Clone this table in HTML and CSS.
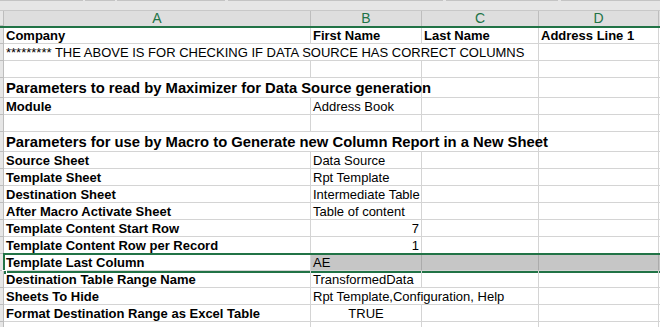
FILE: index.html
```html
<!DOCTYPE html>
<html>
<head>
<meta charset="utf-8">
<link rel="stylesheet" href="styles.css">
</head>
<body>
<div class="sheet">
  <div class="topbar">
    <span class="seg s1"></span><span class="seg s2"></span><span class="seg s3"></span><span class="seg s4"></span><span class="seg s5"></span><span class="seg s6"></span>
  </div>
  <div class="row colhead">
    <div class="rh"></div>
    <div class="ch">A</div>
    <div class="ch">B</div>
    <div class="ch">C</div>
    <div class="ch">D</div>
    <div class="ch last"></div>
  </div>
  <div class="row short">
    <div class="rh"></div>
    <div class="c b">Company</div>
    <div class="c b">First Name</div>
    <div class="c b">Last Name</div>
    <div class="c b">Address Line 1</div>
    <div class="c last"></div>
  </div>
  <div class="row">
    <div class="rh"></div>
    <div class="c span3">********* THE ABOVE IS FOR CHECKING IF DATA SOURCE HAS CORRECT COLUMNS</div>
    <div class="c"></div>
    <div class="c last"></div>
  </div>
  <div class="row">
    <div class="rh"></div>
    <div class="c"></div><div class="c"></div><div class="c"></div><div class="c"></div><div class="c last"></div>
  </div>
  <div class="row tall">
    <div class="rh"></div>
    <div class="c h span2">Parameters to read by Maximizer for Data Source generation</div>
    <div class="c"></div><div class="c"></div><div class="c last"></div>
  </div>
  <div class="row">
    <div class="rh"></div>
    <div class="c b">Module</div>
    <div class="c">Address Book</div>
    <div class="c"></div><div class="c"></div><div class="c last"></div>
  </div>
  <div class="row">
    <div class="rh"></div>
    <div class="c"></div><div class="c"></div><div class="c"></div><div class="c"></div><div class="c last"></div>
  </div>
  <div class="row tall">
    <div class="rh"></div>
    <div class="c h span3">Parameters for use by Macro to Generate new Column Report in a New Sheet</div>
    <div class="c"></div><div class="c last"></div>
  </div>
  <div class="row">
    <div class="rh"></div>
    <div class="c b">Source Sheet</div>
    <div class="c">Data Source</div>
    <div class="c"></div><div class="c"></div><div class="c last"></div>
  </div>
  <div class="row">
    <div class="rh"></div>
    <div class="c b">Template Sheet</div>
    <div class="c">Rpt Template</div>
    <div class="c"></div><div class="c"></div><div class="c last"></div>
  </div>
  <div class="row">
    <div class="rh"></div>
    <div class="c b">Destination Sheet</div>
    <div class="c">Intermediate Table</div>
    <div class="c"></div><div class="c"></div><div class="c last"></div>
  </div>
  <div class="row">
    <div class="rh"></div>
    <div class="c b">After Macro Activate Sheet</div>
    <div class="c">Table of content</div>
    <div class="c"></div><div class="c"></div><div class="c last"></div>
  </div>
  <div class="row">
    <div class="rh"></div>
    <div class="c b">Template Content Start Row</div>
    <div class="c num">7</div>
    <div class="c"></div><div class="c"></div><div class="c last"></div>
  </div>
  <div class="row">
    <div class="rh"></div>
    <div class="c b">Template Content Row per Record</div>
    <div class="c num">1</div>
    <div class="c"></div><div class="c"></div><div class="c last"></div>
  </div>
  <div class="row selected">
    <div class="rh"></div>
    <div class="c b active">Template Last Column</div>
    <div class="c sel">AE</div>
    <div class="c sel"></div><div class="c sel"></div><div class="c sel last"></div>
    <div class="selbox"></div>
    <div class="handle"></div>
  </div>
  <div class="row">
    <div class="rh"></div>
    <div class="c b">Destination Table Range Name</div>
    <div class="c">TransformedData</div>
    <div class="c"></div><div class="c"></div><div class="c last"></div>
  </div>
  <div class="row">
    <div class="rh"></div>
    <div class="c b">Sheets To Hide</div>
    <div class="c span2">Rpt Template,Configuration, Help</div>
    <div class="c"></div><div class="c last"></div>
  </div>
  <div class="row">
    <div class="rh"></div>
    <div class="c b">Format Destination Range as Excel Table</div>
    <div class="c center">TRUE</div>
    <div class="c"></div><div class="c"></div><div class="c last"></div>
  </div>
  <div class="row">
    <div class="rh"></div>
    <div class="c"></div><div class="c"></div><div class="c"></div><div class="c"></div><div class="c last"></div>
  </div>
</div>
</body>
</html>
```

FILE: styles.css
```css
* { box-sizing: border-box; }
html, body { margin: 0; padding: 0; background: #ffffff; }
body { width: 660px; height: 327px; overflow: hidden; font-family: "Liberation Sans", Arial, sans-serif; color: #000; }

.sheet { width: 660px; }

.topbar {
  height: 11px;
  background: #e6e6e6;
  border-bottom: 1px solid #c8c8c8;
  display: flex;
  align-items: flex-start;
}
.seg { height: 1px; background: #c4c4c4; display: block; }
.s1 { width: 83px; }
.s2 { width: 30px; margin-left: 2px; }
.s3 { width: 108px; margin-left: 2px; }
.s4 { width: 215px; margin-left: 3px; }
.s5 { width: 112px; margin-left: 3px; }
.s6 { flex: 1; margin-left: 3px; }

.row {
  display: grid;
  grid-template-columns: 4px 307px 111px 117px 120px 1fr;
  height: 17px;
  position: relative;
}
.row.short { height: 16px; }
.row.tall { height: 20px; }

.colhead {
  height: 17px;
  background: #dedede;
  border-bottom: 2px solid #217346;
}
.ch {
  border-right: 1px solid #bdbdbd;
  color: #217346;
  font-size: 14px;
  line-height: 15px;
  text-align: center;
}
.ch.last { border-right: none; }

.rh {
  background: #e6e6e6;
  border-right: 1px solid #bdbdbd;
  border-bottom: 1px solid #bdbdbd;
}

.c {
  border-right: 1px solid #d4d4d4;
  border-bottom: 1px solid #d4d4d4;
  font-size: 13px;
  line-height: 15px;
  padding: 0 2px 0 2px;
  white-space: nowrap;
  overflow: visible;
  display: flex;
  align-items: flex-end;
}
.c.last { border-right: none; }
.c.b { font-weight: bold; }
.c.h { font-weight: bold; font-size: 14.8px; line-height: 18px; }
.c.num { justify-content: flex-end; }
.c.center { justify-content: center; }
.span2 { grid-column: span 2; }
.span3 { grid-column: span 3; }

.selected .c.sel { background: #c6c6c6; border-right-color: #ababab; }
.selected .c.last { border-right: none; }

.selbox {
  position: absolute;
  left: 3px;
  right: 0;
  top: -1px;
  bottom: -2px;
  border: 2px solid #217346;
  border-right: none;
  pointer-events: none;
}
.handle {
  position: absolute;
  left: 2px;
  bottom: -4px;
  width: 5px;
  height: 5px;
  background: #217346;
  border: 1px solid #fff;
}
```
